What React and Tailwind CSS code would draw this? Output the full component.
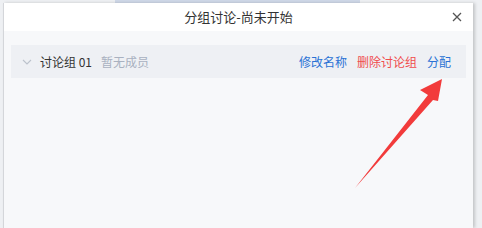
import React from 'react';

const font = { fontFamily: '"Noto Sans CJK SC", "Noto Sans", sans-serif' };

const Arrow = () => (
  <svg className="absolute left-0 top-0 pointer-events-none" width="482" height="228" viewBox="0 0 482 228">
    <polygon
      points="442,79 420,90 428,95 355,188 433,100 438,101"
      fill="#f23b3b"
    />
  </svg>
);

const GroupRow = () => (
  <div className="flex items-center h-[33px] mx-[7px] mt-[14px] bg-[#eef0f4] pl-[11px] pr-[15px] text-[12px]">
    <svg width="10" height="10" viewBox="0 0 10 10" className="mr-[8px]">
      <path d="M1 3 L5 7 L9 3" fill="none" stroke="#bcc2cc" strokeWidth="1.1" />
    </svg>
    <span className="text-[#333]">讨论组 01</span>
    <span className="ml-[9px] text-[#a9b1c0]">暂无成员</span>
    <div className="ml-auto flex items-center gap-[10px]">
      <button className="text-[#2a72d5]">修改名称</button>
      <button className="text-[#f04c4c]">删除讨论组</button>
      <button className="text-[#2a72d5]">分配</button>
    </div>
  </div>
);

export default function App() {
  return (
    <div className="relative w-[482px] h-[228px] overflow-hidden bg-[#eef0f3]" style={font}>
      <div className="h-[3px] ml-[115px] w-[245px] bg-[#cfd8e8]" />
      <div className="ml-[3px] w-[470px] h-[225px] bg-[#f7f8fa] border-l border-[#d4d6da] shadow-[2px_0_3px_rgba(0,0,0,0.18)] flex flex-col">
        <div className="relative h-[28px] bg-white flex items-center justify-center">
          <span className="text-[13px] text-[#333]">分组讨论-尚未开始</span>
          <button className="absolute right-[10px] top-[8px] w-[12px] h-[12px] flex items-center justify-center">
            <svg width="10" height="10" viewBox="0 0 10 10">
              <path d="M1 1 L9 9 M9 1 L1 9" stroke="#555" strokeWidth="1.3" />
            </svg>
          </button>
        </div>
        <GroupRow />
      </div>
      <Arrow />
    </div>
  );
}
